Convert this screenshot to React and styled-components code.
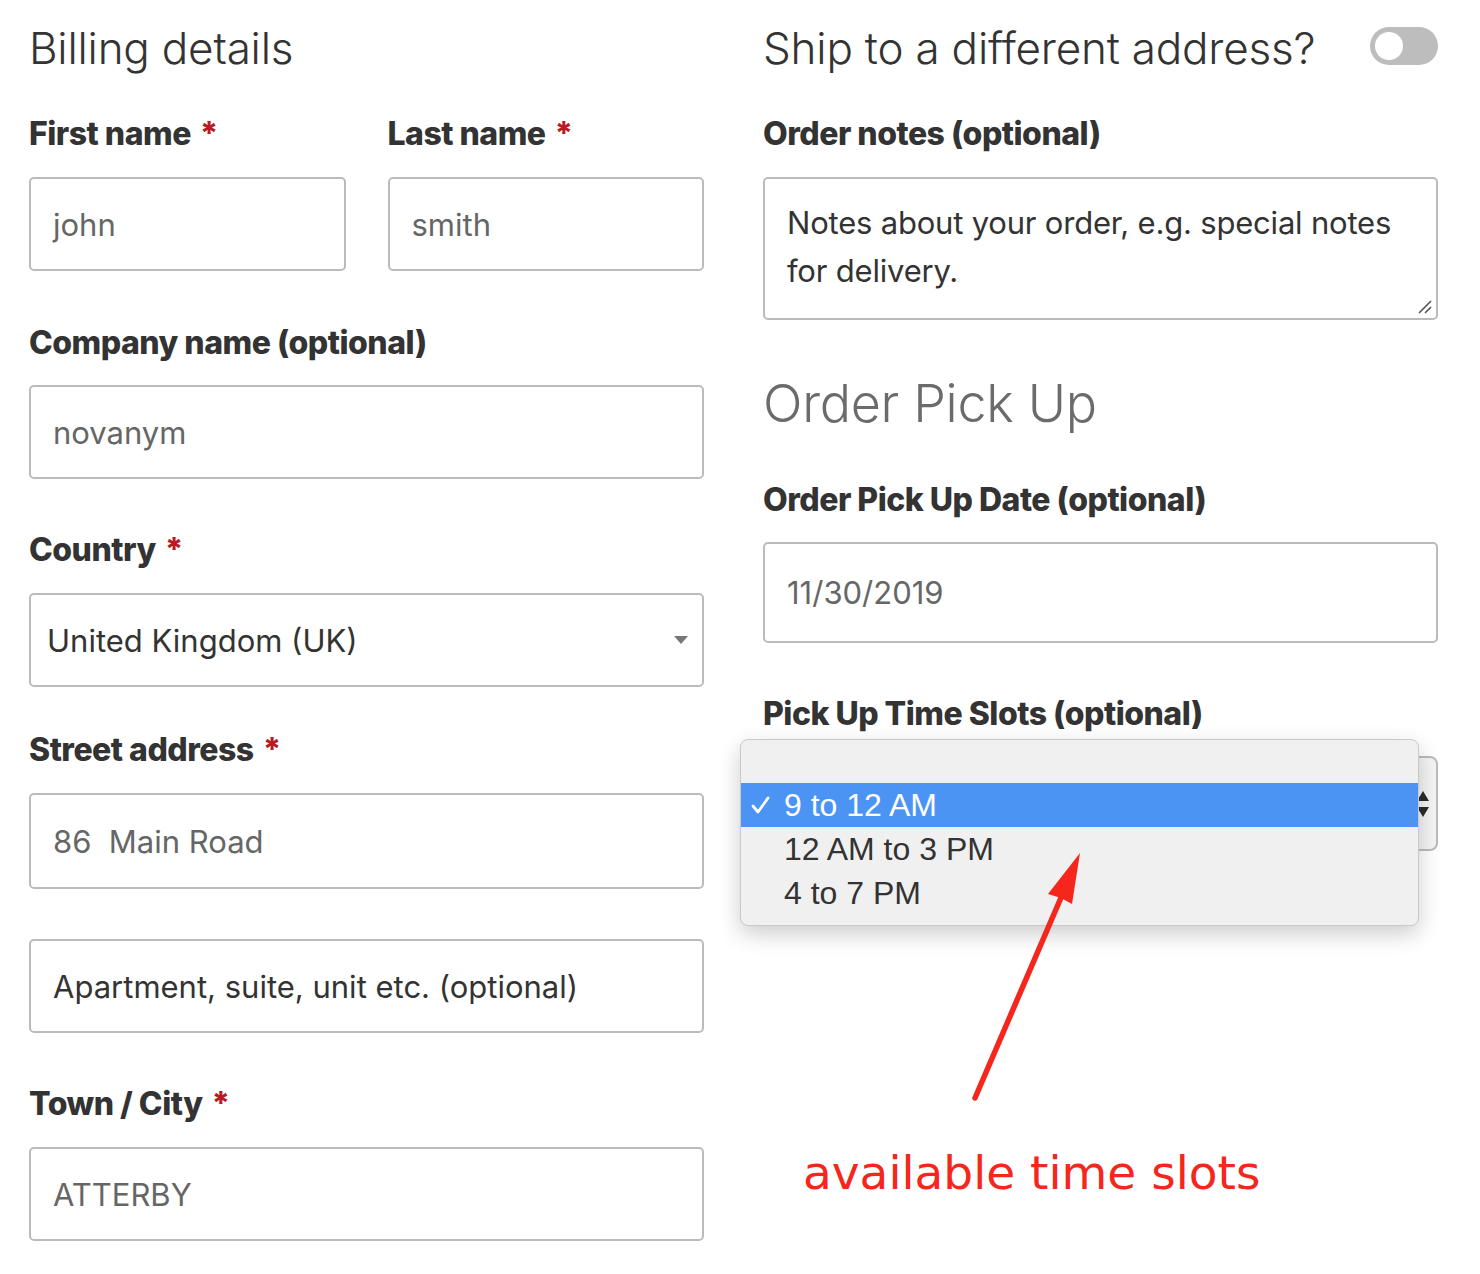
import styled, { createGlobalStyle } from 'styled-components';

const Global = createGlobalStyle`
  body {
    margin: 0;
    background: #fff;
    font-family: 'Inter', 'Liberation Sans', sans-serif;
  }
`;

const Page = styled.div`
  position: relative;
  width: 1480px;
  height: 1274px;
  box-sizing: border-box;
  padding: 24px 42px 0 29px;
  display: grid;
  grid-template-columns: 675px 675px;
  column-gap: 59px;
  overflow: hidden;
`;

const Column = styled.div`
  display: flex;
  flex-direction: column;
`;

const Heading = styled.h3`
  margin: 0;
  height: 48px;
  font-size: 44px;
  line-height: 48px;
  font-weight: 300;
  color: #333;
  letter-spacing: -0.2px;
`;

const HeadRow = styled.div`
  display: flex;
  align-items: center;
  justify-content: space-between;
  height: 48px;
`;

const Toggle = styled.div`
  width: 68px;
  height: 38px;
  border-radius: 19px;
  background: #bdbdbd;
  position: relative;
  margin-top: -4px;
  &::after {
    content: '';
    position: absolute;
    left: 5px;
    top: 5px;
    width: 28px;
    height: 28px;
    border-radius: 50%;
    background: #fff;
  }
`;

const Field = styled.div`
  display: flex;
  flex-direction: column;
  margin-top: ${(p) => p.$mt || 0}px;
  position: relative;
`;

const Row = styled.div`
  display: grid;
  grid-template-columns: 1fr 1fr;
  column-gap: 42px;
  margin-top: ${(p) => p.$mt || 0}px;
`;

const Label = styled.label`
  font-size: 32px;
  line-height: 34px;
  font-weight: 800;
  color: #333;
  letter-spacing: -0.5px;
  margin-bottom: ${(p) => p.$mb || 26}px;
`;

const Req = styled.span`
  color: #b81c23;
  margin-left: 9px;
`;

const Box = styled.div`
  box-sizing: border-box;
  height: ${(p) => p.$h || 94}px;
  border: 2px solid #bbb;
  border-radius: 5px;
  padding: 0 22px;
  display: flex;
  align-items: center;
  font-size: 31px;
  color: ${(p) => p.$color || '#666'};
  white-space: pre;
  margin-top: ${(p) => p.$mt || 0}px;
  position: relative;
`;

const SelectBox = styled(Box)`
  padding-left: 16px;
  color: #333;
  justify-content: space-between;
  padding-right: 14px;
`;

const Caret = styled.span`
  width: 0;
  height: 0;
  border-left: 7px solid transparent;
  border-right: 7px solid transparent;
  border-top: 8px solid #777;
`;

const TextArea = styled.div`
  box-sizing: border-box;
  height: 143px;
  border: 2px solid #bbb;
  border-radius: 5px;
  padding: 20px 22px;
  font-size: 31px;
  line-height: 48px;
  color: #333;
  position: relative;
  letter-spacing: -0.2px;
`;

const Grip = styled.svg`
  position: absolute;
  right: 2px;
  bottom: 2px;
`;

const BigHeading = styled.h3`
  margin: 54px 0 0;
  font-size: 52px;
  line-height: 60px;
  font-weight: 300;
  color: #6b6b6b;
  letter-spacing: -0.3px;
`;

const NativeSelect = styled.div`
  box-sizing: border-box;
  height: 95px;
  border: 2px solid #bbb;
  border-radius: 8px;
  background: #f4f4f4;
  display: flex;
  justify-content: flex-end;
  align-items: center;
  padding-right: 6px;
`;

const Popup = styled.div`
  position: absolute;
  left: -23px;
  top: 42px;
  width: 679px;
  box-sizing: border-box;
  padding: 43px 0 10px;
  background: #f0f0f0;
  border: 1px solid #c9c9c9;
  border-radius: 8px;
  box-shadow: 0 8px 22px rgba(0, 0, 0, 0.2);
  font-family: 'Liberation Sans', Arial, sans-serif;
  font-size: 32px;
`;

const Option = styled.div`
  height: 44px;
  display: flex;
  align-items: center;
  padding-left: 43px;
  position: relative;
  background: ${(p) => (p.$active ? '#4c94f4' : 'transparent')};
  color: ${(p) => (p.$active ? '#fff' : '#333')};
`;

const Check = styled.svg`
  position: absolute;
  left: 10px;
  top: 13px;
`;

const Note = styled.div`
  margin: 294px 0 0 40px;
  font-family: 'DejaVu Sans', Verdana, sans-serif;
  font-size: 47px;
  line-height: 56px;
  color: #f5261b;
`;

const Arrow = styled.svg`
  position: absolute;
  left: 0;
  top: 0;
  pointer-events: none;
`;

const Updown = () => (
  <svg width="14" height="30" viewBox="0 0 14 30">
    <path d="M7 2 L13 12 L1 12 Z" fill="#2b2b2b" />
    <path d="M1 18 L13 18 L7 28 Z" fill="#2b2b2b" />
  </svg>
);

export default function App() {
  return (
    <>
      <Global />
      <Page>
        <Column>
          <Heading>Billing details</Heading>
          <Row $mt={45}>
            <Field>
              <Label>
                First name<Req>*</Req>
              </Label>
              <Box>john</Box>
            </Field>
            <Field>
              <Label>
                Last name<Req>*</Req>
              </Label>
              <Box>smith</Box>
            </Field>
          </Row>
          <Field $mt={55}>
            <Label $mb={25}>Company name (optional)</Label>
            <Box>novanym</Box>
          </Field>
          <Field $mt={54}>
            <Label $mb={26}>
              Country<Req>*</Req>
            </Label>
            <SelectBox>
              United Kingdom (UK)
              <Caret />
            </SelectBox>
          </Field>
          <Field $mt={46}>
            <Label $mb={26}>
              Street address<Req>*</Req>
            </Label>
            <Box $h={96}>86  Main Road</Box>
            <Box $mt={50} $color="#333">
              Apartment, suite, unit etc. (optional)
            </Box>
          </Field>
          <Field $mt={54}>
            <Label $mb={26}>
              Town / City<Req>*</Req>
            </Label>
            <Box>ATTERBY</Box>
          </Field>
        </Column>

        <Column>
          <HeadRow>
            <Heading>Ship to a different address?</Heading>
            <Toggle />
          </HeadRow>
          <Field $mt={45}>
            <Label>Order notes (optional)</Label>
            <TextArea>
              Notes about your order, e.g. special notes for delivery.
              <Grip width="18" height="18" viewBox="0 0 18 18">
                <path d="M3 15 L15 3 M9 15 L15 9" stroke="#555" strokeWidth="1.6" />
              </Grip>
            </TextArea>
          </Field>
          <BigHeading>Order Pick Up</BigHeading>
          <Field $mt={49}>
            <Label $mb={25}>Order Pick Up Date (optional)</Label>
            <Box $h={101}>11/30/2019</Box>
          </Field>
          <Field $mt={54}>
            <Label $mb={25}>Pick Up Time Slots (optional)</Label>
            <NativeSelect>
              <Updown />
            </NativeSelect>
            <Popup>
              <Option $active>
                <Check width="19" height="18" viewBox="0 0 19 18">
                  <path
                    d="M2 10 L7 16 L17 2"
                    fill="none"
                    stroke="#fff"
                    strokeWidth="2.8"
                    strokeLinecap="round"
                    strokeLinejoin="round"
                  />
                </Check>
                9 to 12 AM
              </Option>
              <Option>12 AM to 3 PM</Option>
              <Option>4 to 7 PM</Option>
            </Popup>
          </Field>
          <Note>available time slots</Note>
        </Column>

        <Arrow width="1480" height="1274" viewBox="0 0 1480 1274">
          <path
            d="M975 1098 L1063 893"
            stroke="#f5261b"
            strokeWidth="5.5"
            strokeLinecap="round"
          />
          <path d="M1080 853 L1072 904 L1061 898 L1048 894 Z" fill="#f5261b" />
        </Arrow>
      </Page>
    </>
  );
}
